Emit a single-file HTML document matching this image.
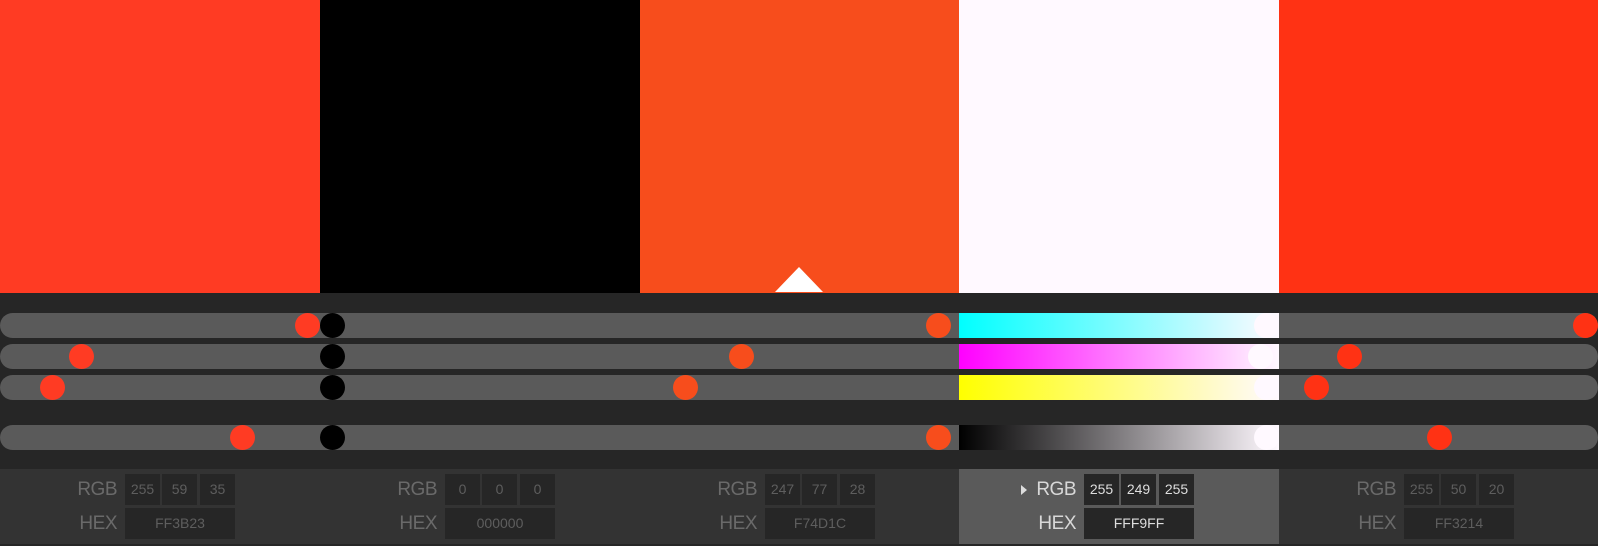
<!DOCTYPE html>
<html><head><style>
*{margin:0;padding:0;box-sizing:border-box}
body{width:1598px;height:546px;background:#262626;position:relative;overflow:hidden;font-family:"Liberation Sans",sans-serif}
.a{position:absolute}
.trk{position:absolute;left:0;width:1598px;height:25px;background:#5a5a5a;border-radius:12.5px}
.k{position:absolute;width:25px;height:25px;border-radius:50%;margin-left:-12.5px}
.pan{position:absolute;top:469px;height:75px;background:#333}
.lbl{position:absolute;left:37px;width:80px;font-size:19px;line-height:31px;color:#6a6a6a;text-align:right;letter-spacing:-0.5px}
.box{position:absolute;height:31px;background:#262626;color:#5e5e5e;font-size:14px;text-align:center;line-height:31px}
.sel .lbl{color:#d8d8d8}.sel .box{color:#ddd}
</style></head><body>
<div class="a" style="left:0;top:0;width:320px;height:293px;background:#FF3B23"></div>
<div class="a" style="left:320px;top:0;width:320px;height:293px;background:#000"></div>
<div class="a" style="left:640px;top:0;width:319px;height:293px;background:#F74D1C"></div>
<div class="a" style="left:959px;top:0;width:320px;height:293px;background:#FFF9FF"></div>
<div class="a" style="left:1279px;top:0;width:319px;height:293px;background:#FF3214"></div>
<svg class="a" style="left:0;top:0" width="1598" height="300"><polygon points="775,292 799,267 823,292" fill="#fff"/></svg>

<div class="trk" style="top:313px"></div>
<div class="trk" style="top:344px"></div>
<div class="trk" style="top:375px"></div>
<div class="trk" style="top:425px"></div>
<div class="a" style="left:959px;top:313px;width:320px;height:25px;background:linear-gradient(90deg,#0ff,#fff9ff)"></div>
<div class="a" style="left:959px;top:344px;width:320px;height:25px;background:linear-gradient(90deg,#f0f,#fff9ff)"></div>
<div class="a" style="left:959px;top:375px;width:320px;height:25px;background:linear-gradient(90deg,#ff0,#fff9ff)"></div>
<div class="a" style="left:959px;top:425px;width:320px;height:25px;background:linear-gradient(90deg,#000,#fff9ff)"></div>

<div class="k" style="left:307px;top:313px;background:#FF3B23"></div>
<div class="k" style="left:81px;top:344px;background:#FF3B23"></div>
<div class="k" style="left:52px;top:375px;background:#FF3B23"></div>
<div class="k" style="left:242px;top:425px;background:#FF3B23"></div>
<div class="k" style="left:332.5px;top:313px;background:#000"></div>
<div class="k" style="left:332.5px;top:344px;background:#000"></div>
<div class="k" style="left:332.5px;top:375px;background:#000"></div>
<div class="k" style="left:332.5px;top:425px;background:#000"></div>
<div class="k" style="left:938px;top:313px;background:#F74D1C"></div>
<div class="k" style="left:741.5px;top:344px;background:#F74D1C"></div>
<div class="k" style="left:685px;top:375px;background:#F74D1C"></div>
<div class="k" style="left:938px;top:425px;background:#F74D1C"></div>
<div class="k" style="left:1266.5px;top:313px;background:#FFF9FF"></div>
<div class="k" style="left:1260px;top:344px;background:#FFF9FF"></div>
<div class="k" style="left:1266.5px;top:375px;background:#FFF9FF"></div>
<div class="k" style="left:1266.5px;top:425px;background:#FFF9FF"></div>
<div class="k" style="left:1585.5px;top:313px;background:#FF3214"></div>
<div class="k" style="left:1349px;top:344px;background:#FF3214"></div>
<div class="k" style="left:1316px;top:375px;background:#FF3214"></div>
<div class="k" style="left:1439px;top:425px;background:#FF3214"></div>

<div class="pan" style="left:0;width:320px"><div class="lbl" style="top:5px">RGB</div><div class="lbl" style="top:39px">HEX</div>
<div class="box" style="left:125px;top:5px;width:35px">255</div><div class="box" style="left:162px;top:5px;width:35px">59</div><div class="box" style="left:200px;top:5px;width:35px">35</div><div class="box" style="left:125px;top:39px;width:110px">FF3B23</div></div>
<div class="pan" style="left:320px;width:320px"><div class="lbl" style="top:5px">RGB</div><div class="lbl" style="top:39px">HEX</div>
<div class="box" style="left:125px;top:5px;width:35px">0</div><div class="box" style="left:162px;top:5px;width:35px">0</div><div class="box" style="left:200px;top:5px;width:35px">0</div><div class="box" style="left:125px;top:39px;width:110px">000000</div></div>
<div class="pan" style="left:640px;width:319px"><div class="lbl" style="top:5px">RGB</div><div class="lbl" style="top:39px">HEX</div>
<div class="box" style="left:125px;top:5px;width:35px">247</div><div class="box" style="left:162px;top:5px;width:35px">77</div><div class="box" style="left:200px;top:5px;width:35px">28</div><div class="box" style="left:125px;top:39px;width:110px">F74D1C</div></div>
<div class="pan sel" style="left:959px;width:320px;background:#5a5a5a"><svg class="a" style="left:61px;top:15px" width="8" height="12"><polygon points="1,1 7,6 1,11" fill="#ddd"/></svg><div class="lbl" style="top:5px">RGB</div><div class="lbl" style="top:39px">HEX</div>
<div class="box" style="left:125px;top:5px;width:35px">255</div><div class="box" style="left:162px;top:5px;width:35px">249</div><div class="box" style="left:200px;top:5px;width:35px">255</div><div class="box" style="left:125px;top:39px;width:110px">FFF9FF</div></div>
<div class="pan" style="left:1279px;width:319px"><div class="lbl" style="top:5px">RGB</div><div class="lbl" style="top:39px">HEX</div>
<div class="box" style="left:125px;top:5px;width:35px">255</div><div class="box" style="left:162px;top:5px;width:35px">50</div><div class="box" style="left:200px;top:5px;width:35px">20</div><div class="box" style="left:125px;top:39px;width:110px">FF3214</div></div>
</body></html>
